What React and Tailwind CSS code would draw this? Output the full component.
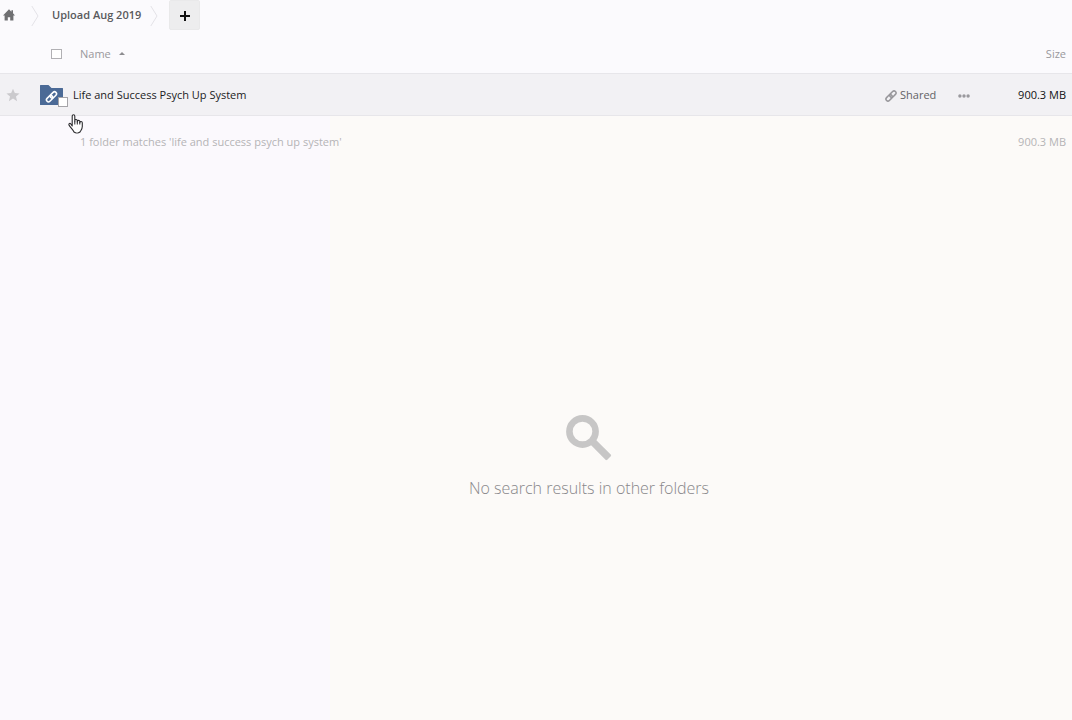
const HomeIcon = () => (
    <svg className="w-3 h-3" viewBox="0 0 12 12" fill="#6f6f72" aria-hidden="true">
        <path d="M6 0.3 L8.4 2.7 V1.2 H10 V4.3 L12 6.4 H10.4 V11.4 H7.2 V8.2 H4.8 V11.4 H1.6 V6.4 H0 Z" />
    </svg>
);

const CrumbArrow = () => (
    <svg className="w-2 h-6 shrink-0" viewBox="0 0 8 24" fill="none" stroke="#e3e2e7" aria-hidden="true">
        <path d="M0.8 2 L7 12 L0.8 22" />
    </svg>
);

const StarIcon = () => (
    <svg className="w-[14px] h-[14px]" viewBox="0 0 16 16" fill="#cbcacd" aria-hidden="true">
        <path d="M8 0.8 L10.1 5.8 L15.5 6.2 L11.4 9.7 L12.7 15 L8 12.1 L3.3 15 L4.6 9.7 L0.5 6.2 L5.9 5.8 Z" />
    </svg>
);

const LinkShape = () => (
    <g fill="none" strokeWidth="1.6" strokeLinecap="round" strokeLinejoin="round">
        <rect x="-2.1" y="-6.6" width="4.2" height="7.6" rx="2.1" />
        <rect x="-2.1" y="-1" width="4.2" height="7.6" rx="2.1" />
    </g>
);

const SharedIcon = () => (
    <svg className="w-3 h-3 mt-[2px]" viewBox="0 0 12 12" stroke="#98979b" aria-hidden="true">
        <g transform="translate(6 6) rotate(45) scale(0.95)">
            <LinkShape />
        </g>
    </svg>
);

const FolderIcon = () => (
    <svg className="w-6 h-5" viewBox="0 0 24 20" aria-hidden="true">
        <path d="M0 0.5 Q0 0 0.5 0 H8.5 L11.5 3 H22.5 Q23 3 23 3.5 V19.5 Q23 20 22.5 20 H0.5 Q0 20 0 19.5 Z" fill="#4b6a96" />
        <g transform="translate(11.5 11.8) rotate(45) scale(0.95)" stroke="#ffffff">
            <LinkShape />
        </g>
    </svg>
);

const SearchIcon = () => (
    <svg className="w-12 h-12" viewBox="0 0 48 48" fill="none" stroke="#c7c6c6" aria-hidden="true">
        <circle cx="17.5" cy="17.5" r="13.1" strokeWidth="6.6" />
        <path d="M27 27 L44 44" strokeWidth="6.4" />
        <path d="M28 28 L43.6 43.6" strokeWidth="7.2" />
    </svg>
);

const HandCursor = () => (
    <svg className="absolute left-7 top-10 w-4 h-5 z-10" viewBox="0 0 16 20" aria-hidden="true">
        <path
            d="M4.2 12 V2.2 C4.2 0.3 6.8 0.3 6.8 2.2 V7.8 V6.4 C7.2 5 9.2 5.2 9.3 6.7 V8 C9.4 5.9 11.7 6 11.8 7.4 V8.8 C12 7 14.2 7.2 14.3 8.8 V12.5 C14.3 15 13 16 12 18 C10.4 19.3 7.6 19.3 6 18 C5 15.8 2.8 13.8 1.2 11.4 C0.3 9.8 1.8 8.8 2.9 10 Z"
            fill="#ffffff"
            stroke="#2b2b2e"
            strokeWidth="1.1"
            strokeLinejoin="round"
        />
        <path d="M6.8 7.5 V10.5 M9.3 7.5 V10.5 M11.8 8.2 V10.5" fill="none" stroke="#2b2b2e" />
    </svg>
);

const Breadcrumb = () => (
    <nav className="flex items-center h-8 pl-[3px] bg-[#fbfafd]" aria-label="Breadcrumb">
        <a href="#home" aria-label="Home" className="w-7 pb-[2px]">
            <HomeIcon />
        </a>
        <CrumbArrow />
        <a href="#upload" className="w-[111px] pl-[13px] pb-[2px] text-[11px] font-semibold text-[#59595c] whitespace-nowrap">
            Upload Aug 2019
        </a>
        <CrumbArrow />
        <button
            type="button"
            aria-label="New"
            className="flex items-center justify-center ml-[11px] mb-[2px] w-[31px] h-[30px] bg-[#ededee] border border-[#e9e9ea] rounded-xs"
        >
            <svg className="w-[10px] h-[10px] mt-[2px]" viewBox="0 0 10 10" stroke="#111111" strokeWidth="2" aria-hidden="true">
                <path d="M5 0 V10 M0 5 H10" />
            </svg>
        </button>
    </nav>
);

const FileTable = () => (
    <table className="w-full table-fixed border-collapse text-[11px] leading-4">
        <colgroup>
            <col className="w-10" />
            <col />
            <col className="w-[101px]" />
            <col className="w-[86px]" />
        </colgroup>
        <thead>
            <tr className="h-[41px] bg-[#fbfafd] text-[#99989c]">
                <td />
                <th className="p-0 pt-[3px] font-normal text-left" scope="col">
                    <div className="flex items-center pl-[11px]">
                        <input
                            type="checkbox"
                            aria-label="Select all"
                            className="appearance-none w-[11px] h-[10px] border border-[#b1b0b4] bg-white"
                        />
                        <button type="button" className="flex items-center gap-2 ml-[18px]">
                            Name
                            <svg className="w-[6px] h-[3px]" viewBox="0 0 6 3" fill="#8d8c90" aria-hidden="true">
                                <path d="M0 3 L3 0 L6 3 Z" />
                            </svg>
                        </button>
                    </div>
                </th>
                <td />
                <th className="p-0 pt-[3px] pr-[6px] font-normal text-right" scope="col">Size</th>
            </tr>
        </thead>
        <tbody>
            <tr className="h-[42px] bg-[#f2f1f4] border-y border-[#e7e6ea]">
                <td className="p-0 pt-[2px] pl-[6px]">
                    <button type="button" aria-label="Favorite" className="block">
                        <StarIcon />
                    </button>
                </td>
                <td className="relative p-0 pt-[2px]">
                    <div className="flex items-center">
                        <div className="relative">
                            <FolderIcon />
                            <input
                                type="checkbox"
                                aria-label="Select Life and Success Psych Up System"
                                className="absolute left-[18px] top-3 appearance-none w-[10px] h-[10px] border border-[#a5a4a8] bg-white"
                            />
                        </div>
                        <a href="#folder" className="ml-[9px] text-[#1b1b1d] whitespace-nowrap">
                            Life and Success Psych Up System
                        </a>
                    </div>
                    <HandCursor />
                </td>
                <td className="p-0 pt-[2px]">
                    <div className="flex items-center">
                        <button type="button" className="flex items-center gap-[3px] w-[73px] text-[#636266]">
                            <SharedIcon />
                            Shared
                        </button>
                        <button type="button" aria-label="Actions">
                            <svg className="w-3 h-4" viewBox="0 0 12 16" fill="#9a999d" aria-hidden="true">
                                <circle cx="1.9" cy="9" r="1.7" />
                                <circle cx="6" cy="9" r="1.7" />
                                <circle cx="10.1" cy="9" r="1.7" />
                            </svg>
                        </button>
                    </div>
                </td>
                <td className="p-0 pt-[2px] pr-[6px] text-right text-[#111113]">900.3 MB</td>
            </tr>
        </tbody>
        <tfoot>
            <tr className="h-[52px] text-[#b5b4b6]">
                <td />
                <td className="p-0 pt-[2px] pl-10">1 folder matches 'life and success psych up system'</td>
                <td />
                <td className="p-0 pt-[2px] pr-[6px] text-right">900.3 MB</td>
            </tr>
        </tfoot>
    </table>
);

const EmptySearch = () => (
    <div className="flex flex-col items-center pl-[106px] pt-[247px] text-[#88878a]">
        <SearchIcon />
        <h2 className="mt-3 text-base leading-7 font-light">No search results in other folders</h2>
    </div>
);

const App = () => {
    return (
        <main className="min-h-screen bg-[linear-gradient(to_right,#fbf9fd_330px,#fcfaf8_330px)] font-['Open_Sans',sans-serif]">
            <Breadcrumb />
            <FileTable />
            <EmptySearch />
        </main>
    );
};

export default App;
